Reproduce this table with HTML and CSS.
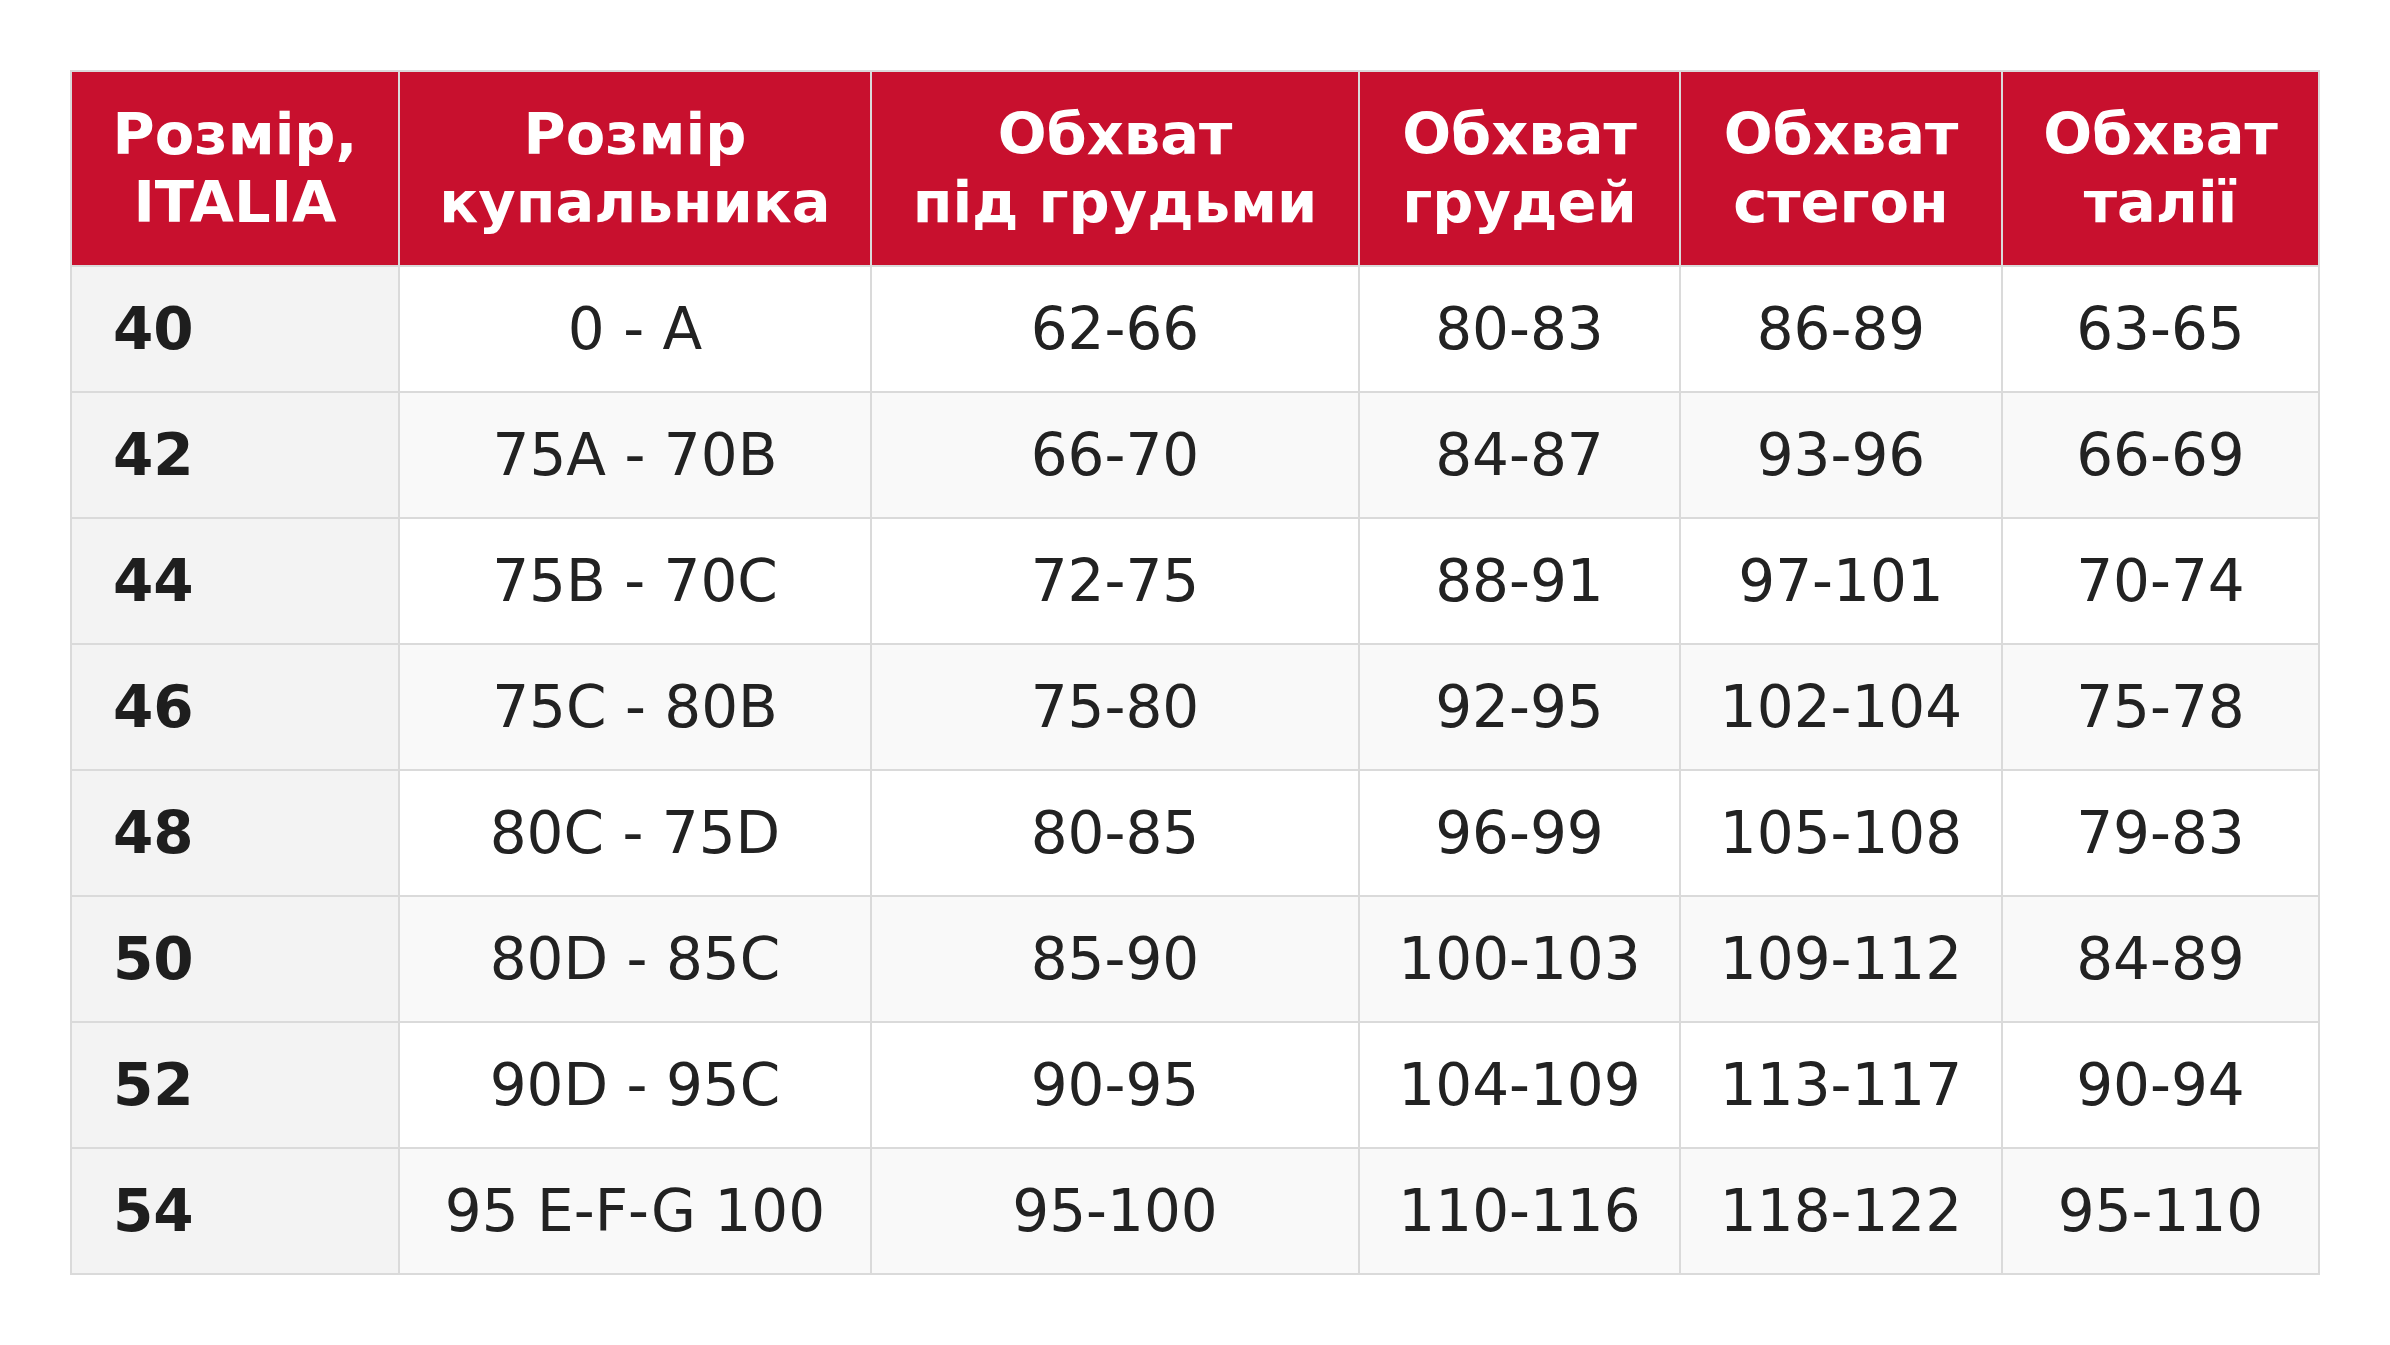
FILE: index.html
```html
<!DOCTYPE html>
<html lang="uk">
<head>
<meta charset="utf-8">
<title>Таблиця розмірів</title>
<link rel="stylesheet" href="styles.css">
</head>
<body>
<table class="size-table">
  <colgroup>
    <col class="c1"><col class="c2"><col class="c3"><col class="c4"><col class="c5"><col class="c6">
  </colgroup>
  <thead>
    <tr>
      <th>Розмір,<br>ITALIA</th>
      <th>Розмір<br>купальника</th>
      <th>Обхват<br>під грудьми</th>
      <th>Обхват<br>грудей</th>
      <th>Обхват<br>стегон</th>
      <th>Обхват<br>талії</th>
    </tr>
  </thead>
  <tbody>
    <tr><td class="size">40</td><td>0 - A</td><td>62-66</td><td>80-83</td><td>86-89</td><td>63-65</td></tr>
    <tr><td class="size">42</td><td>75A - 70B</td><td>66-70</td><td>84-87</td><td>93-96</td><td>66-69</td></tr>
    <tr><td class="size">44</td><td>75B - 70C</td><td>72-75</td><td>88-91</td><td>97-101</td><td>70-74</td></tr>
    <tr><td class="size">46</td><td>75C - 80B</td><td>75-80</td><td>92-95</td><td>102-104</td><td>75-78</td></tr>
    <tr><td class="size">48</td><td>80C - 75D</td><td>80-85</td><td>96-99</td><td>105-108</td><td>79-83</td></tr>
    <tr><td class="size">50</td><td>80D - 85C</td><td>85-90</td><td>100-103</td><td>109-112</td><td>84-89</td></tr>
    <tr><td class="size">52</td><td>90D - 95C</td><td>90-95</td><td>104-109</td><td>113-117</td><td>90-94</td></tr>
    <tr><td class="size">54</td><td>95 E-F-G 100</td><td>95-100</td><td>110-116</td><td>118-122</td><td>95-110</td></tr>
  </tbody>
</table>
</body>
</html>
```
FILE: styles.css
```css
html, body {
  margin: 0;
  padding: 0;
  background: #ffffff;
}
body {
  padding: 70px 0 0 70px;
  font-family: "DejaVu Sans", "Noto Sans", sans-serif;
  color: #222222;
}
.size-table {
  border-collapse: collapse;
  table-layout: fixed;
  width: 2248px;
  border: 2px solid #dadada;
  font-size: 58px;
  line-height: 68px;
}
.c1 { width: 328px; }
.c2 { width: 472px; }
.c3 { width: 488px; }
.c4 { width: 321px; }
.c5 { width: 322px; }
.c6 { width: 317px; }

.size-table th,
.size-table td {
  border: 2px solid #dadada;
  padding: 0 10px;
  text-align: center;
  vertical-align: middle;
  white-space: nowrap;
}
.size-table th {
  background: #c8102e;
  color: #ffffff;
  font-weight: bold;
  font-size: 57.5px;
  height: 193px;
}
.size-table td {
  height: 124px;
  font-weight: normal;
  background: #ffffff;
}
.size-table tbody tr:nth-child(even) td {
  background: #f9f9f9;
}
.size-table td.size,
.size-table tbody tr:nth-child(even) td.size {
  background: #f3f3f3;
  text-align: left;
  padding-left: 41px;
  font-weight: bold;
  color: #1e1e1e;
}
```
